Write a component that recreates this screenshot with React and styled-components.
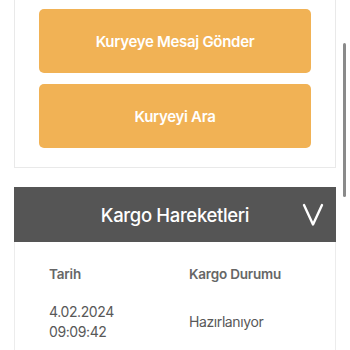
import React from "react";
import styled, { createGlobalStyle } from "styled-components";

const GlobalStyle = createGlobalStyle`
  html, body {
    margin: 0;
    padding: 0;
    background: #ffffff;
    font-family: "Inter", "Noto Sans", sans-serif;
    overflow: hidden;
  }
`;

const Page = styled.div`
  position: relative;
  width: 350px;
  height: 350px;
  padding: 0 14px;
  box-sizing: border-box;
  overflow: hidden;
`;

const ActionCard = styled.div`
  border: 1px solid #e9e9e9;
  border-top: none;
  padding: 9px 24px 19px;
  display: flex;
  flex-direction: column;
  gap: 11px;
`;

const ActionButton = styled.button`
  height: 64px;
  border: none;
  border-radius: 5px;
  background: #f1b255;
  color: #ffffff;
  font-family: inherit;
  font-size: 15px;
  font-weight: 600;
  letter-spacing: -0.3px;
  display: flex;
  align-items: center;
  justify-content: center;
  padding: 0;
`;

const Section = styled.div`
  margin-top: 19px;
`;

const SectionHeader = styled.div`
  position: relative;
  height: 55px;
  background: #555555;
  color: #ffffff;
  display: flex;
  align-items: center;
  justify-content: center;
  font-size: 18.5px;
  font-weight: 500;
  letter-spacing: -0.35px;
`;

const Chevron = styled.svg`
  position: absolute;
  right: 12px;
  top: 16px;
`;

const TableCard = styled.div`
  border: 1px solid #ececec;
  border-top: none;
  padding: 24px 0 30px 34px;
  display: grid;
  grid-template-columns: 140px 1fr;
  row-gap: 20px;
  align-items: center;
`;

const HeadCell = styled.div`
  font-size: 13.5px;
  line-height: 16px;
  font-weight: 600;
  letter-spacing: -0.2px;
  color: #666666;
`;

const Cell = styled.div`
  font-size: 14px;
  line-height: 20px;
  letter-spacing: -0.4px;
  color: #585858;
`;

const ScrollIndicator = styled.div`
  position: absolute;
  right: 4px;
  top: 43px;
  width: 3px;
  height: 154px;
  border-radius: 2px;
  background: #8a8a8a;
`;

export default function App() {
  return (
    <>
      <GlobalStyle />
      <Page>
        <ActionCard>
          <ActionButton>Kuryeye Mesaj Gönder</ActionButton>
          <ActionButton>Kuryeyi Ara</ActionButton>
        </ActionCard>
        <Section>
          <SectionHeader>
            Kargo Hareketleri
            <Chevron width="22" height="24" viewBox="0 0 22 24">
              <polyline
                points="2,2 11,21.5 20,2"
                fill="none"
                stroke="#ffffff"
                strokeWidth="2.4"
                strokeLinecap="round"
                strokeLinejoin="round"
              />
            </Chevron>
          </SectionHeader>
          <TableCard>
            <HeadCell>Tarih</HeadCell>
            <HeadCell>Kargo Durumu</HeadCell>
            <Cell>
              4.02.2024
              <br />
              09:09:42
            </Cell>
            <Cell>Hazırlanıyor</Cell>
          </TableCard>
        </Section>
        <ScrollIndicator />
      </Page>
    </>
  );
}
